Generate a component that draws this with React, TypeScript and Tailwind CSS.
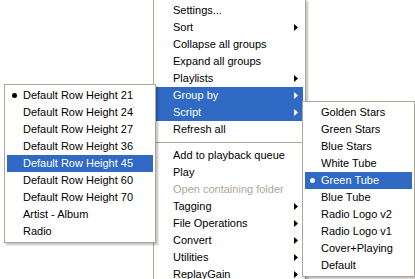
import React from 'react';

type Item = {
  label?: string;
  arrow?: boolean;
  active?: boolean;
  checked?: boolean;
  disabled?: boolean;
  separator?: boolean;
};

const mainItems: Item[] = [
  { label: 'Settings...' },
  { label: 'Sort', arrow: true },
  { label: 'Collapse all groups' },
  { label: 'Expand all groups' },
  { label: 'Playlists', arrow: true },
  { label: 'Group by', arrow: true, active: true },
  { label: 'Script', arrow: true, active: true },
  { label: 'Refresh all' },
  { separator: true },
  { label: 'Add to playback queue' },
  { label: 'Play' },
  { label: 'Open containing folder', disabled: true },
  { label: 'Tagging', arrow: true },
  { label: 'File Operations', arrow: true },
  { label: 'Convert', arrow: true },
  { label: 'Utilities', arrow: true },
  { label: 'ReplayGain', arrow: true },
];

const groupItems: Item[] = [
  { label: 'Default Row Height 21', checked: true },
  { label: 'Default Row Height 24' },
  { label: 'Default Row Height 27' },
  { label: 'Default Row Height 36' },
  { label: 'Default Row Height 45', active: true },
  { label: 'Default Row Height 60' },
  { label: 'Default Row Height 70' },
  { label: 'Artist - Album' },
  { label: 'Radio' },
];

const scriptItems: Item[] = [
  { label: 'Golden Stars' },
  { label: 'Green Stars' },
  { label: 'Blue Stars' },
  { label: 'White Tube' },
  { label: 'Green Tube', active: true, checked: true },
  { label: 'Blue Tube' },
  { label: 'Radio Logo v2' },
  { label: 'Radio Logo v1' },
  { label: 'Cover+Playing' },
  { label: 'Default' },
];

function Arrow({ white }: { white?: boolean }) {
  return (
    <svg width="4" height="7" viewBox="0 0 4 7" className="absolute right-[5px] top-[5px]">
      <polygon points="0,0 4,3.5 0,7" fill={white ? '#ffffff' : '#000000'} />
    </svg>
  );
}

function Row({ item, pad }: { item: Item; pad: string }) {
  if (item.separator) {
    return (
      <div className="h-[9px] flex items-center">
        <div className="h-px w-full bg-[#aca899]" />
      </div>
    );
  }
  const color = item.active ? 'bg-[#316ac5] text-white' : item.disabled ? 'text-[#aca899]' : 'text-black';
  return (
    <div className={`relative h-[17px] leading-[17px] whitespace-nowrap ${pad} ${color}`}>
      {item.checked && (
        <span
          className={`absolute left-[5px] top-[6px] w-[5px] h-[5px] rounded-full ${item.active ? 'bg-white' : 'bg-black'}`}
        />
      )}
      {item.label}
      {item.arrow && <Arrow white={item.active} />}
    </div>
  );
}

function Menu({ items, className, pad }: { items: Item[]; className: string; pad: string }) {
  return (
    <div
      className={`absolute bg-white border border-[#aca899] p-[2px] flex flex-col shadow-[2px_2px_2px_rgba(0,0,0,0.25)] ${className}`}
    >
      {items.map((it, i) => (
        <Row key={i} item={it} pad={pad} />
      ))}
    </div>
  );
}

export default function App() {
  return (
    <div
      className="relative w-[415px] h-[279px] overflow-hidden bg-white text-[11px]"
      style={{ fontFamily: '"Liberation Sans", Arial, sans-serif' }}
    >
      {/* Main context menu */}
      <Menu items={mainItems} className="left-[153px] top-[-1px] w-[153px]" pad="pl-[17px]" />

      {/* Group by submenu */}
      <Menu items={groupItems} className="left-[4px] top-[84px] w-[152px]" pad="pl-[16px]" />

      {/* Script submenu */}
      <Menu items={scriptItems} className="left-[302px] top-[101px] w-[113px]" pad="pl-[16px]" />
    </div>
  );
}
